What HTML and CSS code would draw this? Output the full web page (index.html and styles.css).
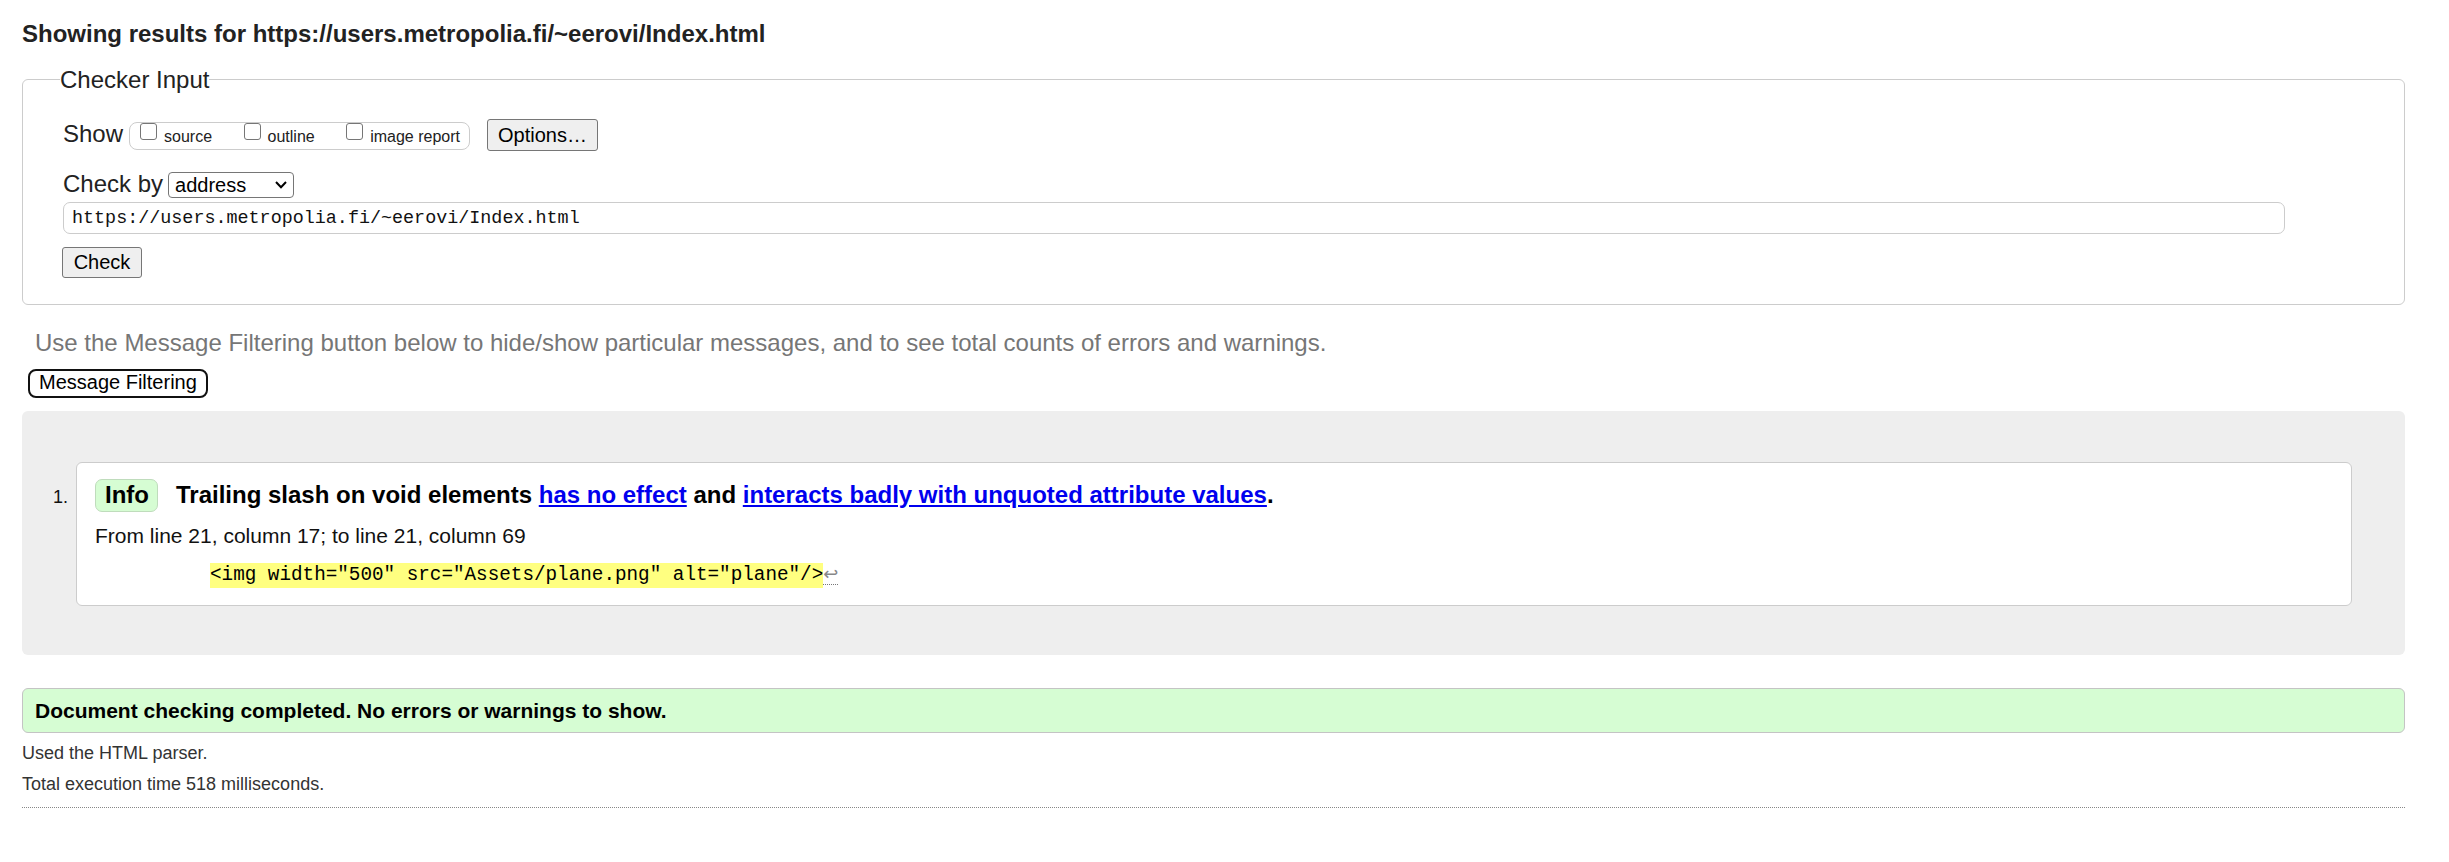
FILE: index.html
```html
<!DOCTYPE html>
<html lang="en">
<head>
<meta charset="utf-8">
<title>Showing results for https://users.metropolia.fi/~eerovi/Index.html - Nu Html Checker</title>
<link rel="stylesheet" href="styles.css">
</head>
<body>
<h2 class="title">Showing results for https://users.metropolia.fi/~eerovi/Index.html</h2>

<fieldset class="checker">
  <legend class="checker-legend">Checker Input</legend>
  <div class="row show-row">
    <span class="row-label">Show</span>
    <span class="opts">
      <label class="opt"><input class="cb" type="checkbox"><span>source</span></label>
      <label class="opt"><input class="cb" type="checkbox"><span>outline</span></label>
      <label class="opt"><input class="cb" type="checkbox"><span>image report</span></label>
    </span>
    <button class="btn options-btn" type="button">Options…</button>
  </div>
  <div class="row by-row">
    <span class="row-label">Check by</span>
    <span class="select"><span>address</span><svg class="chev" width="12" height="8" viewBox="0 0 12 8"><polyline points="1,1 6,6.2 11,1" fill="none" stroke="#000" stroke-width="2"/></svg></span>
  </div>
  <input class="url" type="text" value="https://users.metropolia.fi/~eerovi/Index.html">
  <div class="row check-row">
    <button class="btn check-btn" type="submit">Check</button>
  </div>
</fieldset>

<p class="hint">Use the Message Filtering button below to hide/show particular messages, and to see total counts of errors and warnings.</p>
<button class="filter-btn" type="button">Message Filtering</button>

<div class="results">
  <ol class="msgs">
    <li class="msg">
      <span class="num">1.</span>
      <div class="msg-box">
        <p class="msg-head"><span class="badge">Info</span><span class="msg-text">Trailing slash on void elements <a href="#" class="link">has no effect</a> and <a href="#" class="link">interacts badly with unquoted attribute values</a>.</span></p>
        <p class="loc">From line 21, column 17; to line 21, column 69</p>
        <p class="extract"><code class="code"><mark class="hl">&lt;img width="500" src="Assets/plane.png" alt="plane"/&gt;</mark><abbr class="lf" title="Line break">↩</abbr></code></p>
      </div>
    </li>
  </ol>
</div>

<p class="success">Document checking completed. No errors or warnings to show.</p>
<p class="meta">Used the HTML parser.</p>
<p class="meta">Total execution time 518 milliseconds.</p>
<hr class="rule">
</body>
</html>
```

FILE: styles.css
```css
html, body {
  background: #fff;
}
body {
  margin: 0;
  padding: 20px 44px 0 22px;
  font-family: "Liberation Sans", Arial, sans-serif;
  color: #222;
}

.title {
  margin: 0;
  font-size: 24px;
  line-height: 28px;
  font-weight: bold;
  color: #222;
}

/* Checker input fieldset */
.checker {
  margin: 17px 0 0;
  padding: 25px 40px 26px 40px;
  border: 1px solid #ccc;
  border-radius: 6px;
  min-width: 0;
}
.checker-legend {
  padding: 0;
  margin-left: -3px;
  font-size: 24px;
  line-height: 29px;
  color: #222;
}

.row {
  display: flex;
  align-items: baseline;
}
.row-label {
  font-size: 24px;
  line-height: 28px;
  color: #222;
}

.show-row .row-label {
  margin-right: 6px;
}
.opts {
  display: inline-block;
  border: 1px solid #ccc;
  border-radius: 8px;
  padding: 0 9px 3px 10px;
  font-size: 16px;
  line-height: 18px;
  color: #222;
}
.opt {
  display: inline;
}
.opt + .opt {
  margin-left: 27px;
}
.cb {
  -webkit-appearance: none;
  appearance: none;
  display: inline-block;
  width: 17px;
  height: 17px;
  margin: 0 7px 0 0;
  border: 1.5px solid #767676;
  border-radius: 3px;
  background: #fff;
  vertical-align: 2px;
  box-sizing: border-box;
}

.btn {
  font-family: "Liberation Sans", Arial, sans-serif;
  font-size: 20px;
  color: #000;
  background: #efefef;
  border: 1px solid #767676;
  border-radius: 3px;
  padding: 0 10px;
  margin: 0;
}
.options-btn {
  margin-left: 17px;
  height: 32px;
  line-height: 30px;
  width: 111px;
}

.by-row {
  margin-top: 19px;
}
.by-row .row-label {
  margin-right: 5px;
}
.select {
  display: inline-flex;
  align-items: center;
  justify-content: space-between;
  box-sizing: border-box;
  width: 126px;
  height: 26px;
  padding: 0 6px 0 6px;
  border: 1px solid #767676;
  border-radius: 4px;
  font-size: 20px;
  line-height: 24px;
  color: #000;
  background: #fff;
}
.chev {
  display: block;
}

.url {
  display: block;
  box-sizing: border-box;
  width: calc(100% - 79px);
  height: 32px;
  margin: 4px 0 0;
  padding: 0 8px;
  border: 1px solid #ccc;
  border-radius: 7px;
  font-family: "Liberation Mono", "DejaVu Sans Mono", monospace;
  font-size: 18.4px;
  color: #111;
  background: #fff;
  outline: none;
}

.check-row {
  margin-top: 13px;
}
.check-btn {
  height: 31px;
  line-height: 29px;
  width: 80px;
  margin-left: -1px;
}

.hint {
  margin: 24px 0 0;
  padding-left: 13px;
  font-size: 24px;
  line-height: 28px;
  color: #767676;
}

.filter-btn {
  display: block;
  margin: 12px 0 0 6px;
  height: 29px;
  padding: 0 9px 2px;
  font-family: "Liberation Sans", Arial, sans-serif;
  font-size: 20px;
  line-height: 23px;
  color: #000;
  background: #fff;
  border: 2px solid #111;
  border-radius: 8px;
  box-shadow: inset 0 0 0 1px #fff;
}

.results {
  margin-top: 13px;
  background: #eee;
  border-radius: 6px;
  padding: 51px 53px 49px 31px;
}
.msgs {
  list-style: none;
  margin: 0;
  padding: 0;
}
.msg {
  display: flex;
  align-items: baseline;
}
.num {
  flex: none;
  width: 15px;
  margin-right: 8px;
  font-size: 18px;
  color: #111;
}
.msg-box {
  flex: 1;
  min-width: 0;
  background: #fff;
  border: 1px solid #ccc;
  border-radius: 6px;
  padding: 16px 18px 18px;
}
.msg-head {
  margin: 0;
  font-size: 24px;
  line-height: 28px;
  font-weight: bold;
  color: #000;
}
.badge {
  display: inline-block;
  margin-right: 18px;
  padding: 0 8px 2px 9px;
  font-size: 24px;
  line-height: 29px;
  font-weight: bold;
  color: #000;
  background: #d6fdd3;
  border: 1px solid #bfdcbc;
  border-radius: 7px;
}
.link {
  color: #0000ee;
  text-decoration: underline;
}
.loc {
  margin: 12px 0 0;
  font-size: 21px;
  line-height: 24px;
  color: #111;
}
.extract {
  margin: 14px 0 0;
  padding-left: 115px;
  line-height: 24px;
}
.code {
  font-family: "Liberation Mono", "DejaVu Sans Mono", monospace;
  font-size: 19.3px;
  color: #000;
}
.hl {
  background: #ffff80;
  color: #000;
  padding: 1px 0 2px;
}
.lf {
  font-family: "DejaVu Sans", sans-serif;
  font-size: 18px;
  color: #888;
  text-decoration: none;
  border-bottom: 1px dotted #777;
}

.success {
  margin: 33px 0 0;
  padding: 8px 12px;
  font-size: 21px;
  line-height: 27px;
  font-weight: bold;
  color: #000;
  background: #d6fdd3;
  border: 1px solid #c4c4c4;
  border-radius: 6px;
}
.meta {
  margin: 10px 0;
  font-size: 18px;
  line-height: 21px;
  color: #333;
}
.rule {
  margin: 12px 0 0;
  border: 0;
  border-top: 1px dotted #888;
  height: 0;
}
```
